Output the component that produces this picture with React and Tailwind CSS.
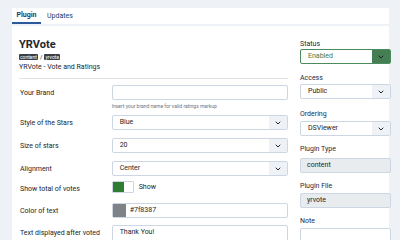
import { ChevronDown } from "lucide-react";

const font = { fontFamily: "Roboto, 'Noto Sans', sans-serif" };

function Select({ value, className = "" }) {
  return (
    <div className={`flex h-[15px] items-center rounded-[2px] border border-[#cdd6e3] bg-white ${className}`}>
      <span className="flex-1 pl-[7px] text-[7px] text-[#22262a]">{value}</span>
      <span className="flex h-full w-[18px] items-center justify-center bg-[#eef2f7]">
        <ChevronDown size={8} strokeWidth={3} className="text-[#22262a]" />
      </span>
    </div>
  );
}

function Row({ label, children, className = "" }) {
  return (
    <div className={`flex ${className}`}>
      <div className="w-[92px] pt-[3px] text-[7px] text-[#22262a]">{label}</div>
      <div className="w-[177px]">{children}</div>
    </div>
  );
}

function SideField({ label, children, className = "" }) {
  return (
    <div className={className}>
      <div className="h-[9px] text-[7px] leading-[9px] text-[#1c2b45]">{label}</div>
      {children}
    </div>
  );
}

export default function App() {
  return (
    <div style={font} className="h-[240px] w-[400px] overflow-hidden bg-[#eef2f7] pl-3 pt-2">
      <div className="h-[240px] w-[377px] bg-white">
        {/* Tabs */}
        <div className="flex h-[18px] border-b-2 border-[#eef2f7]">
          <div className="flex h-[16px] w-[29px] items-center justify-center border-b-[2px] border-[#2a5a9a] text-[7px] font-bold text-[#1c3d6b]">
            Plugin
          </div>
          <div className="flex h-[16px] items-center pl-[6px] text-[7px] text-[#1c3d6b]">Updates</div>
        </div>

        <div className="flex pl-[7px]">
          {/* Left column */}
          <div className="w-[269px]">
            <div className="mt-[12px] h-[14px] text-[11px] leading-[14px] font-bold text-[#22262a]">YRVote</div>
            <div className="mt-[1px] flex h-[7px] items-center gap-[2px] text-[6px]">
              <span className="rounded-[1px] bg-[#3b3f44] px-[1px] text-[5px] leading-[6px] text-white">content</span>
              <span className="text-[#22262a]">/</span>
              <span className="rounded-[1px] bg-[#3b3f44] px-[1px] text-[5px] leading-[6px] text-white">yrvote</span>
            </div>
            <div className="mt-[3px] h-[9px] text-[7px] leading-[9px] text-[#22262a]">YRVote - Vote and Ratings</div>
            <div className="mt-[6px] h-px bg-[#dfe3e7]" />

            <Row label="Your Brand" className="mt-[6px] ml-px">
              <div className="h-[15px] rounded-[2px] border border-[#cdd6e3] bg-white" />
              <div className="mt-[3px] text-[5px] leading-[6px] text-[#6c757d]">Insert your brand name for valid ratings markup</div>
            </Row>
            <Row label="Style of the Stars" className="mt-[6px] ml-px">
              <Select value="Blue" />
            </Row>
            <Row label="Size of stars" className="mt-[8px] ml-px">
              <Select value="20" />
            </Row>
            <Row label="Alignment" className="mt-[8px] ml-px">
              <Select value="Center" />
            </Row>
            <Row label="Show total of votes" className="mt-[5px] ml-px">
              <div className="flex items-center">
                <div className="flex h-[12px] w-[22px] rounded-[1px] border border-[#cdd6e3]">
                  <div className="w-[11px] bg-[#2f7d32]" />
                  <div className="flex-1 bg-white" />
                </div>
                <span className="ml-[5px] text-[7px] text-[#22262a]">Show</span>
              </div>
            </Row>
            <Row label="Color of text" className="mt-[8px] ml-px">
              <div className="flex h-[15px] items-center rounded-[2px] border border-[#cdd6e3] bg-white">
                <div className="h-[13px] w-[13px] bg-[#7f8387]" />
                <span className="ml-[4px] text-[7px] text-[#22262a]">#7f8387</span>
              </div>
            </Row>
            <Row label="Text displayed after voted" className="mt-[7px] ml-px">
              <div className="flex h-[16px] items-center rounded-[2px] border border-[#cdd6e3] bg-white pl-[7px] text-[7px] text-[#22262a]">
                Thank You!
              </div>
            </Row>
          </div>

          {/* Right column */}
          <div className="ml-[12px] w-[91px] shrink-0">
            <SideField label="Status" className="mt-[14px]">
              <div className="flex h-[15px] items-center rounded-[2px] border border-[#4c8c5c] bg-white">
                <span className="flex-1 pl-[7px] text-[7px] text-[#3f7a4d]">Enabled</span>
                <span className="flex h-full w-[18px] items-center justify-center bg-[#457d54]">
                  <ChevronDown size={8} strokeWidth={3} className="text-[#1d2a20]" />
                </span>
              </div>
            </SideField>
            <SideField label="Access" className="mt-[10px]">
              <Select value="Public" className="mt-[1px]" />
            </SideField>
            <SideField label="Ordering" className="mt-[11px]">
              <Select value="DSViewer" className="mt-[2px]" />
            </SideField>
            <SideField label="Plugin Type" className="mt-[9px]">
              <div className="mt-[4px] flex h-[15px] items-center rounded-[2px] border border-[#cdd6e3] bg-[#e9ecef] pl-[6px] text-[7px] text-[#22262a]">
                content
              </div>
            </SideField>
            <SideField label="Plugin File" className="mt-[9px]">
              <div className="mt-[2px] flex h-[15px] items-center rounded-[2px] border border-[#cdd6e3] bg-[#e9ecef] pl-[6px] text-[7px] text-[#22262a]">
                yrvote
              </div>
            </SideField>
            <SideField label="Note" className="mt-[9px]">
              <div className="mt-[2px] h-[20px] rounded-[2px] border border-[#cdd6e3] bg-white" />
            </SideField>
          </div>
        </div>
      </div>
    </div>
  );
}
